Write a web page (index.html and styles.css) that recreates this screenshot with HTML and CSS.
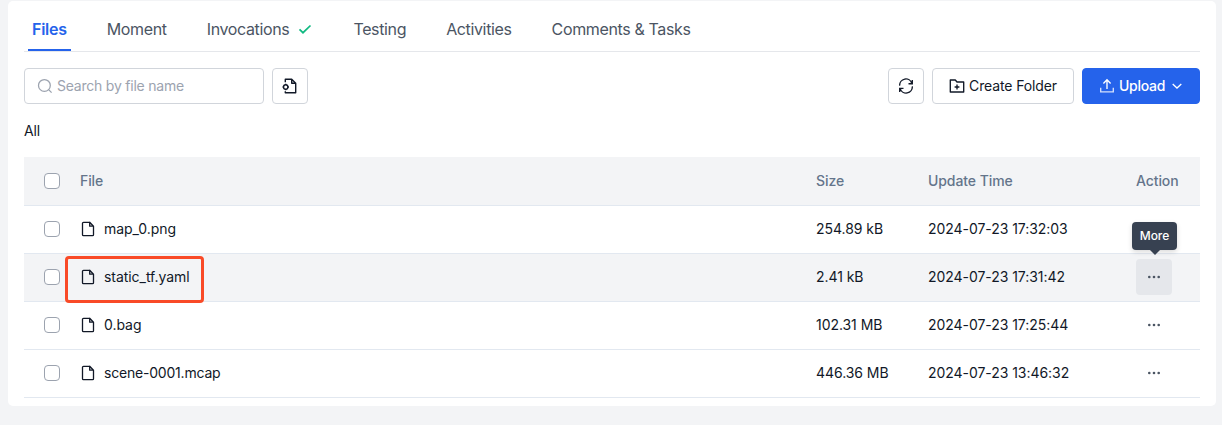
FILE: index.html
```html
<!DOCTYPE html>
<html lang="en">
<head>
<meta charset="utf-8">
<title>Files</title>
<link rel="stylesheet" href="styles.css">
</head>
<body>
<svg class="defs" width="0" height="0">
  <symbol id="doc" viewBox="0 0 16 16"><path d="M9.700 1.300H3.500a1 1 0 0 0-1 1v11.400a1 1 0 0 0 1 1h9a1 1 0 0 0 1-1V5.200L9.700 1.300V5.200h3.800" fill="none" stroke="currentColor" stroke-width="1.300" stroke-linejoin="round"/></symbol>
  <symbol id="dots" viewBox="0 0 16 16"><circle cx="3.300" cy="8" r="1.300"/><circle cx="8" cy="8" r="1.300"/><circle cx="12.700" cy="8" r="1.300"/></symbol>
</svg>
<main class="card">
  <nav class="tabs">
    <a class="tab active">Files</a>
    <a class="tab">Moment</a>
    <a class="tab">Invocations
      <svg class="check" width="16" height="16" viewBox="0 0 16 16"><path d="M2.500 8.300l3.500 3.400 7.500-7.200" fill="none" stroke="currentColor" stroke-width="1.700"/></svg>
    </a>
    <a class="tab">Testing</a>
    <a class="tab">Activities</a>
    <a class="tab">Comments &amp; Tasks</a>
  </nav>
  <div class="toolbar">
    <div class="search">
      <svg width="16" height="16" viewBox="0 0 16 16" fill="none" stroke="currentColor" stroke-width="1.250"><circle cx="7.400" cy="7.400" r="5.900"/><path d="M11.600 11.600l3 3"/></svg>
      <span>Search by file name</span>
    </div>
    <button class="btn square">
      <svg width="16" height="16" viewBox="0 0 16 16" fill="none" stroke="currentColor" stroke-width="1.400"><path d="M3.300 4.300V1.300h6.400l4 3.900v9.500H3.300v-1.500M9.700 1.300v3.900h4" stroke-linejoin="round"/><circle cx="3.700" cy="9" r="2.200"/><path d="M3.700 5.700v1.100M3.700 11.200v1.100M.6 9h.9M5.900 9h1"/></svg>
    </button>
    <div class="spacer"></div>
    <button class="btn square">
      <svg width="16" height="16" viewBox="0 0 16 16" fill="none" stroke="currentColor" stroke-width="1.350"><path d="M1.700 7.600A6.200 6.200 0 0 1 13.800 5.300M14.300 1.900v3.800h-3.800M14.300 8.400A6.200 6.200 0 0 1 2.200 10.700M1.700 14.100v-3.800h3.800"/></svg>
    </button>
    <button class="btn create">
      <svg width="16" height="16" viewBox="0 0 16 16" fill="none" stroke="currentColor" stroke-width="1.350"><path d="M1.300 2h5l1.700 2h6.700v10H1.300zM8 6.600v4.800M5.600 9h4.800" stroke-linejoin="round"/></svg>
      <span>Create Folder</span>
    </button>
    <button class="btn primary">
      <svg width="16" height="16" viewBox="0 0 16 16" fill="none" stroke="currentColor" stroke-width="1.350"><path d="M8 11V2M4.400 5.400L8 1.800l3.600 3.600"/><path d="M1.700 9.700v4.200h12.600V9.700" opacity=".8"/></svg>
      <span>Upload</span>
      <svg class="caret" width="12" height="12" viewBox="0 0 12 12" fill="none" stroke="currentColor" stroke-width="1.300"><path d="M1.700 4l4.300 4 4.300-4"/></svg>
    </button>
  </div>
  <div class="crumb">All</div>
  <div class="table">
    <div class="row head">
      <i class="box"></i><span>File</span><span>Size</span><span>Update Time</span><span>Action</span>
    </div>
    <div class="row">
      <i class="box"></i><span class="file"><svg width="16" height="16"><use href="#doc"/></svg>map_0.png</span><span>254.89 kB</span><span>2024-07-23 17:32:03</span>
    </div>
    <div class="row hover">
      <i class="box"></i><span class="file"><svg width="16" height="16"><use href="#doc"/></svg>static_tf.yaml<b class="marker"></b></span><span>2.41 kB</span><span>2024-07-23 17:31:42</span>
      <span class="more on"><svg width="16" height="16"><use href="#dots"/></svg><span class="tip">More</span></span>
    </div>
    <div class="row">
      <i class="box"></i><span class="file"><svg width="16" height="16"><use href="#doc"/></svg>0.bag</span><span>102.31 MB</span><span>2024-07-23 17:25:44</span>
      <span class="more"><svg width="16" height="16"><use href="#dots"/></svg></span>
    </div>
    <div class="row">
      <i class="box"></i><span class="file long"><svg width="16" height="16"><use href="#doc"/></svg>scene-0001.mcap</span><span>446.36 MB</span><span>2024-07-23 13:46:32</span>
      <span class="more"><svg width="16" height="16"><use href="#dots"/></svg></span>
    </div>
  </div>
</main>
</body>
</html>
```
FILE: styles.css
```css
* { box-sizing: border-box; }
body {
  margin: 0;
  padding: 1px 6px 0 8px;
  height: 425px;
  overflow: hidden;
  background: #f3f4f6;
  color: #111827;
  font: 14px/20px Inter, sans-serif;
}
.defs { position: absolute; }
svg { flex: none; display: block; }
.card {
  height: 405px;
  padding: 0 16px;
  background: #fff;
  border-radius: 5px;
}
.tabs {
  display: flex;
  gap: 32px;
  height: 51px;
  padding-left: 4px;
  border-bottom: 1px solid #e5e7eb;
  color: #4b5563;
  font-size: 16px;
  line-height: 24px;
  letter-spacing: -0.36px;
}
.tab {
  display: flex;
  height: 50px;
  padding: 16px 4px 0;
  white-space: nowrap;
}
.tab.active {
  color: #2563eb;
  font-weight: 600;
  letter-spacing: -0.25px;
  border-bottom: 2px solid #2563eb;
}
.check { margin: 4px 0 0 8px; color: #10b981; }
.toolbar {
  display: flex;
  gap: 8px;
  padding-top: 16px;
}
.search, .btn {
  display: flex;
  align-items: center;
  height: 36px;
  border: 1px solid #d1d5db;
  border-radius: 4px;
  background: #fff;
}
.search {
  width: 240px;
  gap: 4px;
  padding-left: 12px;
  color: #9ca3af;
  letter-spacing: -0.22px;
}
.btn {
  justify-content: center;
  gap: 4px;
  padding: 0;
  color: #111827;
  font: inherit;
}
.square { width: 36px; }
.spacer { flex: 1; }
.create { width: 142px; letter-spacing: -0.13px; }
.primary {
  width: 118px;
  background: #2563eb;
  border-color: #2563eb;
  color: #fff;
  font-weight: 500;
  letter-spacing: -0.25px;
}
.caret { margin-left: 2px; }
.crumb { padding: 17px 0 16px; letter-spacing: -0.2px; }
.row {
  display: grid;
  grid-template-columns: 36px 736px 112px 208px 48px;
  align-items: center;
  height: 48px;
  padding: 0 0 1px 20px;
  border-bottom: 1px solid #e2e8f0;
  letter-spacing: -0.05px;
}
.head {
  height: 49px;
  padding-bottom: 0;
  background: #f3f4f6;
  color: #64748b;
  font-weight: 500;
  letter-spacing: -0.08px;
}
.hover { background: #f3f4f6; }
.box {
  width: 16px;
  height: 16px;
  border: 1px solid #9ca3af;
  border-radius: 4px;
  background: #fff;
}
.file {
  position: relative;
  display: flex;
  align-items: center;
  gap: 8px;
}
.long { letter-spacing: -0.2px; }
.marker {
  position: absolute;
  left: -15px;
  top: -11px;
  width: 139px;
  height: 47px;
  border: 3px solid #f94a27;
  border-radius: 4px;
}
.more {
  position: relative;
  display: flex;
  align-items: center;
  justify-content: center;
  width: 36px;
  height: 36px;
  border-radius: 4px;
  color: #4b5563;
}
.more svg { fill: currentColor; }
.on { background: #e5e7eb; }
.tip {
  position: absolute;
  left: -4px;
  top: -37px;
  width: 45px;
  height: 28px;
  border-radius: 4px;
  background: #374151;
  color: #fff;
  font-size: 12px;
  font-weight: 500;
  line-height: 28px;
  text-align: center;
  box-shadow: 0 2px 5px rgba(0, 0, 0, .15);
}
.tip::after {
  content: "";
  position: absolute;
  left: 18px;
  top: 28px;
  border: 5px solid transparent;
  border-top-color: #374151;
  border-bottom: 0;
}
```
